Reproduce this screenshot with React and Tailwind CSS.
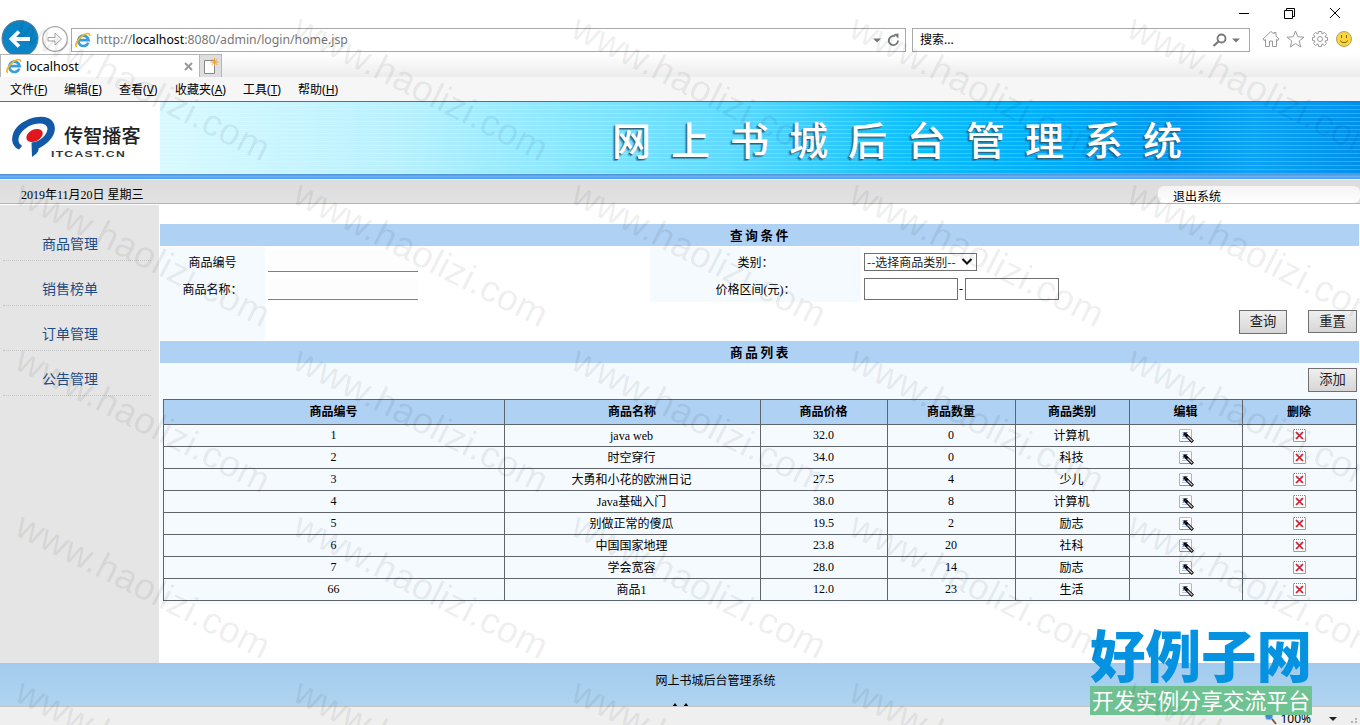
import React, { useState } from "react";

const menus = [
  { text: "文件", key: "F", width: "w-[54px]" },
  { text: "编辑", key: "E", width: "w-[55px]" },
  { text: "查看", key: "V", width: "w-[56px]" },
  { text: "收藏夹", key: "A", width: "w-[68px]" },
  { text: "工具", key: "T", width: "w-[55px]" },
  { text: "帮助", key: "H", width: "w-[55px]" },
];

const sideLinks = ["商品管理", "销售榜单", "订单管理", "公告管理"];

const columns = ["商品编号", "商品名称", "商品价格", "商品数量", "商品类别", "编辑", "删除"];

const products = [
  { id: "1", name: "java web", price: "32.0", num: "0", category: "计算机" },
  { id: "2", name: "时空穿行", price: "34.0", num: "0", category: "科技" },
  { id: "3", name: "大勇和小花的欧洲日记", price: "27.5", num: "4", category: "少儿" },
  { id: "4", name: "Java基础入门", price: "38.0", num: "8", category: "计算机" },
  { id: "5", name: "别做正常的傻瓜", price: "19.5", num: "2", category: "励志" },
  { id: "6", name: "中国国家地理", price: "23.8", num: "20", category: "社科" },
  { id: "7", name: "学会宽容", price: "28.0", num: "14", category: "励志" },
  { id: "66", name: "商品1", price: "12.0", num: "23", category: "生活" },
];

const IeIcon = () => (
  <svg width="16" height="16" viewBox="0 0 16 16" className="shrink-0">
    <path
      d="M13.3 10.600A5.200 5.200 0 1 1 13.600 8.200H4"
      fill="none"
      stroke="#3a9edc"
      strokeWidth="2.700"
    />
    <path
      d="M2 14.600C-.6 14 1.600 8.600 6 4.800S15 .2 14.600 3.800"
      fill="none"
      stroke="#f2b61c"
      strokeWidth="1.700"
    />
  </svg>
);

const EditIcon = () => (
  <svg width="15" height="15" viewBox="0 0 15 15" className="inline-block align-top">
    <path d="M.5 1.500V13.500H12.500V1.500" fill="#fff" stroke="#9db8e8" />
    <path d="M1 13.500H12.500" stroke="#6f94de" />
    <path d="M1.500 1.500H12" stroke="#5f86d0" strokeDasharray="1 1" />
    <path d="M3 4.500H9M3 6.500H9M3 8.500H8M3 10.500H8" stroke="#b4c6ea" />
    <path d="M6.500 6.500L13.800 13.800" stroke="#000" strokeWidth="3.200" />
    <path d="M8.500 8.500L13.300 13.300" stroke="#ccc" strokeWidth="1.300" />
    <path d="M4.500 4.500H8.500L4.500 8.500Z" fill="#000" />
  </svg>
);

const DeleteIcon = () => (
  <svg width="13" height="14" viewBox="0 0 13 14" className="inline-block align-top">
    <path d="M.5 1.500V13.500H12.500V1.500" fill="#fff" stroke="#7ea3e6" />
    <path d="M1 1.500H12" stroke="#5f86d0" strokeDasharray="1 1" />
    <path d="M3 4.500H10M3 6.500H10M3 10.500H10" stroke="#d3def4" />
    <path d="M3 4L10 11M10 4L3 11" stroke="#cc1f26" strokeWidth="1.700" />
  </svg>
);

const BrowserBar = () => (
  <div className="flex h-[102px] flex-col border-b border-[#6b6b6b] bg-white font-['Noto_Sans','Noto_Sans_CJK_SC',sans-serif] text-xs text-black">
    <div className="flex h-[26px] items-center justify-end pr-[19px]">
      <svg width="102" height="12" viewBox="0 0 102 12" fill="none" stroke="#000">
        <path d="M0 6.500H10" />
        <path d="M45.500 3.500H53.500V11.500H45.500ZM47.500 3V1.500H55.500V9.500H54" />
        <path d="M91 1L101 11M101 1L91 11" />
      </svg>
    </div>
    <div className="flex h-[26px] items-center">
      <div className="relative flex h-full w-[71px] shrink-0">
        <svg className="absolute -top-[6px] left-0" width="71" height="34" viewBox="0 20 71 34">
          <circle cx="20" cy="38.500" r="18" fill="#0a84c6" stroke="#6a7f8c" />
          <path d="M30 39H12M19 31.500L11.500 39L19 46.500" fill="none" stroke="#fff" strokeWidth="3.800" />
          <circle cx="55" cy="39" r="12.300" fill="#fff" stroke="#a9a9a9" strokeWidth="1.300" />
          <path d="M48 37.500H55V33L61.500 39L55 45V41H48Z" fill="none" stroke="#a2a2a2" />
        </svg>
      </div>
      <div className="mt-[1px] flex h-6 w-[835px] items-center border border-[#a9a9a9] pr-1 pl-[3px]">
        <IeIcon />
        <span className="mt-[2px] ml-[5px] text-[12.300px] tracking-[-0.020px] text-[#777]">
          http://<span className="text-black">localhost</span>:8080/admin/login/home.jsp
        </span>
        <svg className="ml-auto" width="29" height="16" viewBox="0 0 29 16">
          <path d="M1 6.500H9L5 10.500Z" fill="#777" />
          <path d="M26 8.500A4.600 4.600 0 1 1 23 4.200" fill="none" stroke="#777" strokeWidth="1.800" />
          <path d="M21.500 2L26.500 1.500V6.500Z" fill="#777" />
        </svg>
      </div>
      <div className="mt-[1px] ml-[6px] flex h-6 w-[338px] items-center border border-[#a9a9a9] px-[7px]">
        搜索...
        <svg className="ml-auto" width="30" height="16" viewBox="0 0 30 16">
          <circle cx="9.500" cy="6.500" r="4" fill="none" stroke="#777" strokeWidth="1.800" />
          <path d="M6.500 9.500L1.500 14" stroke="#777" strokeWidth="2.200" />
          <path d="M20 6.500H28L24 10.500Z" fill="#777" />
        </svg>
      </div>
      <svg className="-mt-px ml-[12px]" width="92" height="20" viewBox="0 0 92 20" fill="none" stroke="#9a9a9a">
        <path d="M1 10L9 2.500L12 5V3.500H14V7L17 10L16 11.500L14.500 10.500V17.500H10.500V12H7.500V17.500H3.500V10.500L2 11.500Z" />
        <path d="M33.500 2L35.800 7.800L42 8.200L37.200 12L38.800 18L33.500 14.600L28.200 18L29.800 12L25 8.200L31.200 7.800Z" />
        <path d="M56.500 2.500H59.500L60 5L62.500 3.500L64.500 5.500L63 8L65.500 8.500V11.500L63 12L64.500 14.500L62.500 16.500L60 15L59.500 17.500H56.500L56 15L53.500 16.500L51.500 14.500L53 12L50.500 11.500V8.500L53 8L51.500 5.500L53.500 3.500L56 5Z" />
        <circle cx="58" cy="10" r="2.500" />
        <circle cx="82" cy="10" r="7.500" fill="#fbd53a" stroke="#b0a070" />
        <path d="M79.500 6V9M84.500 6V9M78 11.500Q82 16 86 11.500" stroke="#7a6420" />
      </svg>
    </div>
    <div className="mt-[2px] flex h-[23px] bg-linear-to-b from-white to-[#ececec]">
      <div className="flex w-[200px] items-center border border-b-0 border-[#b5b5b5] bg-white pl-[5px]">
        <IeIcon />
        <span className="mt-[2px] ml-[4px] text-[12.500px]">localhost</span>
        <svg className="mr-[6px] ml-auto" width="9" height="9" viewBox="0 0 9 9">
          <path d="M1 1L8 8M8 1L1 8" stroke="#999" strokeWidth="2" />
        </svg>
      </div>
      <div className="w-[22px] border border-b-0 border-l-0 border-[#b5b5b5] bg-[#dedede]">
        <svg width="20" height="22" viewBox="0 0 20 22">
          <path d="M4.500 5.500H14.500V18.500H4.500Z" fill="#fff" stroke="#888" />
          <path d="M14.500 3V11M10.500 7H18.500M11.800 4.200L17.200 9.800M17.200 4.200L11.800 9.800" stroke="#eca02c" />
        </svg>
      </div>
    </div>
    <div className="flex h-6 items-center bg-[#f6f6f6] pt-[2px] pl-[10px]">
      {menus.map((m) => (
        <span key={m.key} className={`${m.width} whitespace-nowrap`}>
          {m.text}
          <span>
            (<u>{m.key}</u>)
          </span>
        </span>
      ))}
    </div>
  </div>
);

const Banner = () => (
  <div className="flex h-[72px] bg-white">
    <div className="flex w-40 items-start pt-[14px] pl-[11px]">
      <svg width="45" height="42" viewBox="0 0 45 42">
        <path
          d="M8 33.500C-1 30 -1 18 7 10C16 2 29 -1 37 2C46 6 46 17 38 25C35 28 31 31 27.500 32.500C28 36 25 38 21 41L20.500 26.500C29 26 36 19 36.500 13C36.500 8 30 6.500 24 8C14 10.500 7 18 7.500 24.500C7.500 27 9.500 28.500 11 30Z"
          fill="#1259a8"
        />
        <ellipse cx="23.500" cy="19.500" rx="8.800" ry="5.800" transform="rotate(-27 23.500 19.500)" fill="#e0171c" />
      </svg>
      <div className="-ml-[5px] pt-[7px]">
        <div className="pl-[13px] font-['Noto_Sans_CJK_SC',sans-serif] text-[19.200px] leading-[24px] font-medium whitespace-nowrap text-[#222]">
          传智播客
        </div>
        <svg className="block" width="80" height="14" viewBox="0 0 80 14">
          <text
            x="0"
            y="10"
            textLength="75"
            lengthAdjust="spacingAndGlyphs"
            fontFamily="Liberation Sans, sans-serif"
            fontWeight="700"
            fontSize="9.500"
            letterSpacing="1"
            fill="#333"
          >
            ITCAST.CN
          </text>
        </svg>
      </div>
    </div>
    <div className="flex-1 bg-[repeating-linear-gradient(180deg,transparent_0px,transparent_3px,#ffffff38_3px,#ffffff38_4px),linear-gradient(95deg,#daf9ff_0%,#b9f0ff_20%,#7ee4ff_37%,#5cd8ff_48%,#10c0fc_62%,#00adfb_74%,#0099f2_84%,#0aa3f7_91%,#0090ec_100%)] pt-[6px] pl-[452px]">
      <div className="font-['Noto_Sans_CJK_SC',sans-serif] text-[39px] leading-[60px] font-medium tracking-[20px] whitespace-nowrap text-white [text-shadow:-1px_1px_1px_#2d5d70,-2px_2px_1px_#2d5d7080]">
        网上书城后台管理系统
      </div>
    </div>
  </div>
);

const SideBar = () => (
  <div className="w-[159px] bg-[#e5e5e5] pt-[11px] pr-[8px] pl-[3px]">
    {sideLinks.map((link) => (
      <a
        key={link}
        className="block h-[45px] border-b border-dotted border-[#c4c4c4] pt-[17px] pr-[14px] text-center text-sm leading-6 text-[#1f4b84]"
      >
        {link}
      </a>
    ))}
  </div>
);

const SectionTitle = ({ children }) => (
  <div className="h-[22px] bg-[#afd1f3] pl-[2px] text-center text-[12.600px] leading-[24px] font-bold tracking-[2.600px]">
    {children}
  </div>
);

const Button = ({ children, onClick, className = "" }) => (
  <button
    onClick={onClick}
    className={`border border-[#707070] bg-linear-to-b from-[#efefef] to-[#d6d6d6] text-[13.300px] leading-[22px] text-[#222] ${className}`}
  >
    {children}
  </button>
);

const SearchForm = () => {
  const [form, setForm] = useState({ id: "", name: "", min: "", max: "" });
  const change = (e) => setForm({ ...form, [e.target.name]: e.target.value });
  const reset = () => setForm({ id: "", name: "", min: "", max: "" });
  const line = "block w-[150px] border-b border-[#808080] bg-[#fdfdfe]";
  const box = "h-[22px] w-[94px] border border-[#707070] bg-white px-1";

  return (
    <div className="flex h-[95px] pt-px">
      <div className="h-[93px] w-[105px] bg-[#f5faff] text-center">
        <div className="h-[27px] leading-[32px]">商品编号</div>
        <div className="h-[27px] leading-[32px]">商品名称：</div>
      </div>
      <div className="w-[385px] pt-[4px] pl-[3px]">
        <input name="id" value={form.id} onChange={change} className={`${line} h-[21px]`} />
        <input name="name" value={form.name} onChange={change} className={`${line} mt-[7px] h-[21px]`} />
      </div>
      <div className="h-[55px] w-[211px] bg-[#f5faff] text-center">
        <div className="h-[27px] leading-[32px]">类别：</div>
        <div className="h-[27px] leading-[32px]">价格区间(元)：</div>
      </div>
      <div className="flex-1 pt-[6px] pl-[3px]">
        <div className="flex h-[18px] w-[113px] items-center border border-[#707070] bg-white pl-[2px] font-['Noto_Sans_CJK_SC',sans-serif] text-xs">
          <span className="whitespace-nowrap text-[#222]">--选择商品类别--</span>
          <svg className="mr-[3px] ml-auto" width="12" height="8" viewBox="0 0 12 8">
            <path d="M1.500 1L6 5.500L10.500 1" fill="none" stroke="#111" strokeWidth="2" />
          </svg>
        </div>
        <div className="mt-[7px] flex items-center">
          <input name="min" value={form.min} onChange={change} className={box} />
          <span className="w-[7px] pl-[1px]">-</span>
          <input name="max" value={form.max} onChange={change} className={box} />
        </div>
        <div className="mt-[10px] flex items-start justify-end pr-[2px]">
          <Button className="mr-[21px] h-6 w-[48px]">查询</Button>
          <Button onClick={reset} className="h-[23px] w-[49px]">
            重置
          </Button>
        </div>
      </div>
    </div>
  );
};

const ProductTable = () => (
  <div className="h-[241px] bg-[#f5faff] pt-[5px] pr-[2px] pl-[3px]">
    <div className="flex h-[31px] justify-end">
      <Button className="h-6 w-[49px]">添加</Button>
    </div>
    <table className="w-[1194px] table-fixed border-collapse text-center">
      <colgroup>
        <col className="w-[341px]" />
        <col className="w-[256px]" />
        <col className="w-[127px]" />
        <col className="w-[128px]" />
        <col className="w-[114px]" />
        <col className="w-[113px]" />
        <col className="w-[114px]" />
      </colgroup>
      <thead>
        <tr className="h-[25px] bg-[#afd1f3]">
          {columns.map((c) => (
            <th key={c} className="border border-[#60656b] p-0 pr-px leading-[22px]">
              {c}
            </th>
          ))}
        </tr>
      </thead>
      <tbody>
        {products.map((p) => (
          <tr key={p.id} className="h-[22px]">
            <td className="border border-[#60656b] p-0 pr-px pb-[2px] leading-[18px]">{p.id}</td>
            <td className="border border-[#60656b] p-0 pr-[2px] leading-[20px]">{p.name}</td>
            <td className="border border-[#60656b] p-0 pr-px pb-[2px] leading-[18px]">{p.price}</td>
            <td className="border border-[#60656b] p-0 pr-px pb-[2px] leading-[18px]">{p.num}</td>
            <td className="border border-[#60656b] p-0 pr-[2px] leading-[20px]">{p.category}</td>
            <td className="border border-[#60656b] p-0 pt-[1px] leading-[16px]">
              <EditIcon />
            </td>
            <td className="border border-[#60656b] p-0 leading-[16px]">
              <DeleteIcon />
            </td>
          </tr>
        ))}
      </tbody>
    </table>
  </div>
);

// text tiled over the whole window
const Watermark = () => (
  <svg className="pointer-events-none absolute inset-0" width="1360" height="725">
    {[0, 1, 2, 3, 4].map((row) =>
      [0, 1, 2, 3, 4].map((col) => (
        <text
          key={`${row}-${col}`}
          transform={`translate(${13 + col * 278} ${36 + row * 166}) rotate(26.800)`}
          textLength="279"
          fontFamily="Liberation Sans, sans-serif"
          fontSize="37"
          fill="#000"
          fillOpacity="0.080"
        >
          www.haolizi.com
        </text>
      ))
    )}
  </svg>
);

const App = () => {
  return (
    <div className="relative h-[725px] w-[1360px] overflow-hidden bg-white font-['Liberation_Serif','Noto_Sans_CJK_SC',serif] text-xs text-black">
      <BrowserBar />
      <Banner />
      <div className="h-[6px] border-b border-[#e8f2fb] bg-linear-to-b from-[#4a8fd6] via-[#6ab0f0] to-[#3f9bf0]"></div>
      <div className="flex h-6 justify-between border-b border-[#b4b4b4] bg-linear-to-b from-[#dcdcdc] to-[#e2e2e2]">
        <span className="pl-[21px] leading-[31px]">2019年11月20日 星期三</span>
        <a className="mt-[6px] w-[202px] rounded-md bg-linear-to-b from-[#f4f4f4] to-white pl-[15px] leading-[23px]">
          退出系统
        </a>
      </div>
      <div className="flex h-[459px] pt-px">
        <SideBar />
        <div className="ml-px w-[1199px] pt-[19px]">
          <SectionTitle>查询条件</SectionTitle>
          <SearchForm />
          <SectionTitle>商品列表</SectionTitle>
          <ProductTable />
        </div>
      </div>
      <div className="h-[43px] overflow-hidden bg-linear-to-b from-[#a3cbee] to-[#afd4f0] pl-[71px] text-center">
        <div className="leading-[36px]">网上书城后台管理系统</div>
        <svg className="mx-auto -mt-px block" width="90" height="10" viewBox="0 0 90 10">
          <path d="M1 9L4 5L7 9ZM12 9L15 5L18 9Z" />
        </svg>
      </div>
      <div className="flex h-[19px] justify-end border-t border-[#c4c4c4] bg-[#efefef] pr-[3px] font-['Noto_Sans',sans-serif] leading-[24px]">
        <svg className="mt-[5px]" width="13" height="13" viewBox="0 0 13 13">
          <circle cx="5" cy="4" r="4" fill="#3f8fd8" stroke="#a9c8e4" />
          <path d="M8 7L12 12" stroke="#7a5a3a" strokeWidth="2" />
        </svg>
        <span className="ml-[3px]">100%</span>
        <svg className="mt-[10px] ml-[18px]" width="28" height="9" viewBox="0 0 28 9">
          <path d="M0 0H8L4 4Z" fill="#222" />
          <path d="M26 1h2v2h-2zM22 4h2v2h-2zM26 4h2v2h-2z" fill="#b5b5b5" />
        </svg>
      </div>
      <div className="absolute top-[628px] left-[1090px] w-[222px] font-['Noto_Sans_CJK_SC',sans-serif]">
        <div className="h-[58px] text-[55.500px] leading-[50px] font-black whitespace-nowrap text-[#0592e0]">
          好例子网
        </div>
        <div className="h-[29px] bg-[#6fc292] text-center text-[21.800px] leading-[27px] whitespace-nowrap text-white">
          开发实例分享交流平台
        </div>
      </div>
      <Watermark />
    </div>
  );
};

export default App;
